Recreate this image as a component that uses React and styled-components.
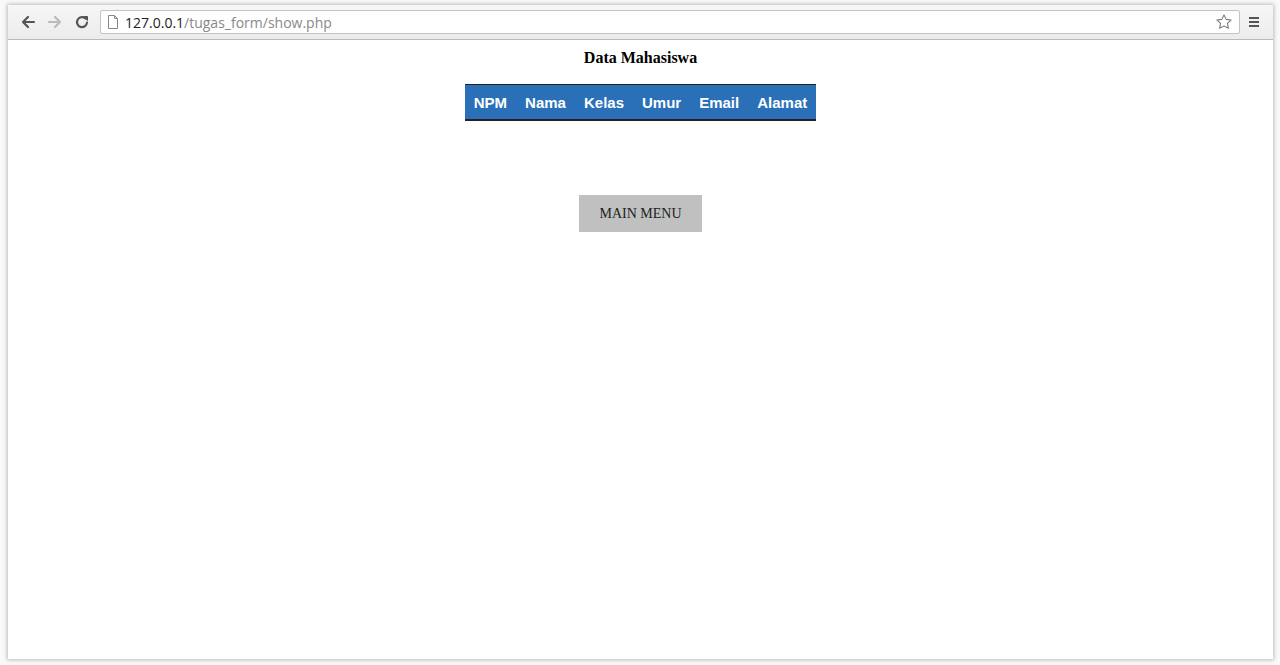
import React from "react";
import styled, { createGlobalStyle } from "styled-components";

const Global = createGlobalStyle`
  html, body { margin: 0; background: #fff; }
  body { width: 1280px; height: 665px; overflow: hidden; }
`;

const Frame = styled.div`
  box-sizing: border-box;
  width: 1280px; height: 665px;
  padding: 5px 7px 6px 8px;
  background: #fafafa;
`;
const Window = styled.div`
  height: 100%;
  display: flex; flex-direction: column;
  background: #fff;
  box-shadow: 0 0 4px 1px rgba(0,0,0,0.25);
`;
const Toolbar = styled.div`
  height: 35px; box-sizing: border-box;
  display: flex; align-items: center; gap: 0;
  padding: 0 6px 0 6px;
  background: linear-gradient(#f6f6f6, #ececec);
  border-bottom: 1px solid #b9b9b9;
`;
const NavBtn = styled.div`
  width: 27px; height: 24px; display: flex; align-items: center; justify-content: center;
`;
const Omnibox = styled.div`
  flex: 1; height: 24px; margin-left: 5px; box-sizing: border-box;
  display: flex; align-items: center; gap: 6px; padding: 0 6px;
  background: #fff; border: 1px solid #c4c4c4; border-radius: 2px;
  font-family: "Open Sans", "Liberation Sans", sans-serif; font-size: 14px; color: #888;
  span { color: #222; }
`;
const Star = styled.div`margin-left: auto; display: flex;`;
const Content = styled.div`
  flex: 1; display: flex; flex-direction: column; align-items: center;
  font-family: "Liberation Serif", serif;
`;
const Title = styled.h3`
  margin: 8px 0 0; font-size: 16px; font-weight: bold; line-height: 19px;
`;
const Table = styled.table`
  margin-top: 17px; border-collapse: collapse; background: #2a70b9;
  border-top: 1px solid #222; border-bottom: 2px solid #222;
`;
const Th = styled.th`
  color: #fff; font-family: "Liberation Sans", Arial, sans-serif; font-size: 15px; font-weight: bold;
  height: 34px; padding: 0 9px;
`;
const Button = styled.div`
  margin-top: 74px; width: 123px; height: 37px; display: flex; align-items: center; justify-content: center;
  background: #c0c0c0; font-size: 14px; color: #222;
`;

const ic = { stroke: "#555", strokeWidth: 2.2, fill: "none", strokeLinecap: "round", strokeLinejoin: "round" };

export default function App() {
  return (
    <>
      <Global />
      <Frame>
        <Window>
          <Toolbar>
            <NavBtn><svg width="16" height="16" viewBox="0 0 16 16"><path d="M14 8H3M8 3L3 8l5 5" {...ic} /></svg></NavBtn>
            <NavBtn><svg width="16" height="16" viewBox="0 0 16 16"><path d="M2 8h11M8 3l5 5-5 5" {...ic} stroke="#bbb" /></svg></NavBtn>
            <NavBtn><svg width="16" height="16" viewBox="0 0 16 16"><path d="M13 8.5A5 5 0 1 1 11.5 4.5" {...ic} /><path d="M9.5 2.5h4v4z" fill="#555" stroke="#555" strokeWidth="1" /></svg></NavBtn>
            <Omnibox>
              <svg width="12" height="14" viewBox="0 0 12 14"><path d="M1.5 .5h6l3 3v10h-9z M7.5 .5v3h3" fill="none" stroke="#888" /></svg>
              <div><span>127.0.0.1</span>/tugas_form/show.php</div>
              <Star><svg width="18" height="18" viewBox="0 0 24 24"><path d="M12 2.5l2.9 6 6.6.8-4.9 4.5 1.3 6.6L12 17.2l-5.9 3.2 1.3-6.6-4.9-4.5 6.6-.8z" fill="none" stroke="#777" strokeWidth="1.4" strokeLinejoin="round" /></svg></Star>
            </Omnibox>
            <NavBtn><svg width="14" height="14" viewBox="0 0 14 14"><path d="M2 3h10M2 7h10M2 11h10" stroke="#555" strokeWidth="2.2" /></svg></NavBtn>
          </Toolbar>
          <Content>
            <Title>Data Mahasiswa</Title>
            <Table>
              <thead>
                <tr>{["NPM", "Nama", "Kelas", "Umur", "Email", "Alamat"].map(h => <Th key={h}>{h}</Th>)}</tr>
              </thead>
            </Table>
            <Button>MAIN MENU</Button>
          </Content>
        </Window>
      </Frame>
    </>
  );
}
